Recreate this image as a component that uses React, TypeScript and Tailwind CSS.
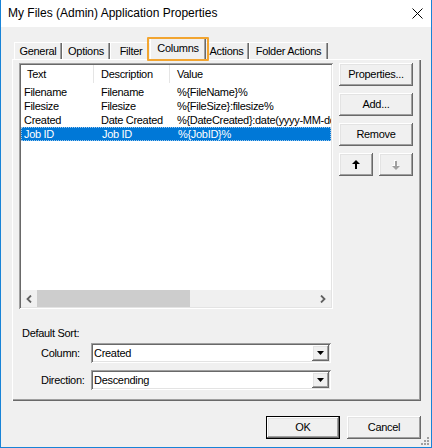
import React from 'react';

const raised =
  'shadow-[inset_-1px_-1px_#696969,inset_1px_1px_#ffffff,inset_-2px_-2px_#a0a0a0,inset_2px_2px_#e3e3e3]';
const sunken =
  'shadow-[inset_1px_1px_#a0a0a0,inset_-1px_-1px_#ffffff,inset_2px_2px_#696969,inset_-2px_-2px_#e3e3e3]';

const tabs = [
  { label: 'General', w: 'w-[48px]' },
  { label: 'Options', w: 'w-[48px]' },
  { label: 'Filter', w: 'w-[42px]' },
  { label: 'Columns', w: 'w-[56px]', active: true },
  { label: 'Actions', w: 'w-[45px]' },
  { label: 'Folder Actions', w: 'w-[79px]' },
];

const rows = [
  { text: 'Filename', desc: 'Filename', value: '%{FileName}%' },
  { text: 'Filesize', desc: 'Filesize', value: '%{FileSize}:filesize%' },
  { text: 'Created', desc: 'Date Created', value: '%{DateCreated}:date(yyyy-MM-dd)%' },
  { text: 'Job ID', desc: 'Job ID', value: '%{JobID}%', selected: true },
];

const Arrow = ({ down = false, disabled = false }: { down?: boolean; disabled?: boolean }) => (
  <svg width="8" height="10" viewBox="0 0 8 10" className={down ? 'rotate-180' : ''}>
    {disabled && <path d="M4.5 1 L8.5 5 L6 5 L6 10 L4 10 L4 5 L1.5 5 Z" fill="#ffffff" />}
    <path d="M4 0 L8 4 L5 4 L5 9 L3 9 L3 4 L0 4 Z" fill={disabled ? '#a0a0a0' : '#000000'} />
  </svg>
);

const Combo = ({ value }: { value: string }) => (
  <div className={`w-[240px] h-[20px] bg-white ${sunken} flex items-center p-[2px]`}>
    <span className="flex-1 pl-[1px]">{value}</span>
    <div className={`w-[17px] h-full bg-[#f0f0f0] ${raised} flex items-center justify-center`}>
      <svg width="7" height="4" viewBox="0 0 7 4">
        <path d="M0 0 L7 0 L3.5 4 Z" fill="#000" />
      </svg>
    </div>
  </div>
);

export default function App() {
  return (
    <div
      className="w-[432px] h-[448px] flex flex-col border-x border-b border-[#1883d7] bg-[#f0f0f0] text-black text-[11px] tracking-[-0.3px] leading-[13px] relative overflow-hidden"
      style={{ fontFamily: '"Liberation Sans", Arial, sans-serif' }}
    >
      {/* Title bar */}
      <div className="h-[27px] bg-white flex items-center pl-[7px] pr-[7px] tracking-normal">
        <span className="text-[12px] flex-1">My Files (Admin) Application Properties</span>
        <svg width="11" height="11" viewBox="0 0 11 11" className="mr-[1px]">
          <path d="M0.5 0.5 L10.5 10.5 M10.5 0.5 L0.5 10.5" stroke="#000" strokeWidth="1" />
        </svg>
      </div>

      <div className="flex-1 flex flex-col pt-[11px]">
        {/* Tabs */}
        <div className="flex items-end h-[21px] pl-[13px]">
          {tabs.map((t) =>
            t.active ? (
              <div
                key={t.label}
                className={`${t.w} h-[22px] -mx-[2px] -mb-px relative z-10 bg-[#f0f0f0] shadow-[inset_1px_1px_#ffffff,inset_-1px_0_#696969,inset_-2px_0_#a0a0a0] flex justify-center pt-[4px]`}
              >
                Columns
                <div className="absolute -left-[3px] -right-[3px] -top-[1px] -bottom-[1px] border-2 border-[#f2a531] rounded-[1px]" />
              </div>
            ) : (
              <div
                key={t.label}
                className={`${t.w} h-[17px] shadow-[inset_1px_1px_#ffffff,inset_-1px_0_#696969,inset_-2px_0_#a0a0a0] flex justify-center pt-[3px]`}
              >
                {t.label}
              </div>
            ),
          )}
        </div>

        {/* Panel */}
        <div className="ml-[11px] w-[409px] h-[342px] shadow-[inset_1px_1px_#ffffff,inset_-1px_-1px_#696969,inset_-2px_-2px_#a0a0a0] pt-[4px] pl-[7px] flex flex-col">
          <div className="flex gap-[6px]">
            {/* List view */}
            <div className={`w-[314px] h-[246px] bg-white ${sunken} p-[2px] flex flex-col`}>
              <div className="h-[18px] flex items-center shrink-0">
                <div className="w-[73px] h-full border-r border-[#e5e5e5] pl-[6px] flex items-center">Text</div>
                <div className="w-[76px] h-full border-r border-[#e5e5e5] pl-[7px] flex items-center">Description</div>
                <div className="flex-1 pl-[7px]">Value</div>
              </div>
              <div className="mt-[2px] flex flex-col">
                {rows.map((r) => (
                  <div
                    key={r.text}
                    className={`h-[14px] flex items-center whitespace-nowrap overflow-hidden ${
                      r.selected ? 'bg-[#0078d7] text-white border border-dotted border-[#9cc8ee]' : ''
                    }`}
                  >
                    <div className={`w-[73px] ${r.selected ? 'pl-[2px]' : 'pl-[3px]'}`}>{r.text}</div>
                    <div className="w-[76px] pl-[7px]">{r.desc}</div>
                    <div className="flex-1 pl-[7px] overflow-hidden">{r.value}</div>
                  </div>
                ))}
              </div>
              {/* Horizontal scrollbar */}
              <div className="mt-auto h-[17px] bg-[#f0f0f0] flex items-center">
                <div className="w-[16px] h-full flex items-center justify-center">
                  <svg width="6" height="8" viewBox="0 0 6 8">
                    <path d="M5 0.5 L1.5 4 L5 7.5" stroke="#606060" strokeWidth="1.8" fill="none" />
                  </svg>
                </div>
                <div className="w-[153px] h-full bg-[#cdcdcd]" />
                <div className="flex-1" />
                <div className="w-[17px] h-full flex items-center justify-center">
                  <svg width="6" height="8" viewBox="0 0 6 8">
                    <path d="M1 0.5 L4.5 4 L1 7.5" stroke="#606060" strokeWidth="1.8" fill="none" />
                  </svg>
                </div>
              </div>
            </div>

            {/* Side buttons */}
            <div className="w-[74px] flex flex-col gap-[7px]">
              <button className={`h-[23px] ${raised} bg-[#f0f0f0]`}>Properties...</button>
              <button className={`h-[23px] ${raised} bg-[#f0f0f0]`}>Add...</button>
              <button className={`h-[23px] ${raised} bg-[#f0f0f0]`}>Remove</button>
              <div className="flex justify-between">
                <button className={`w-[34px] h-[23px] ${raised} bg-[#f0f0f0] flex items-center justify-center`}>
                  <Arrow />
                </button>
                <button className={`w-[34px] h-[23px] ${raised} bg-[#f0f0f0] flex items-center justify-center`}>
                  <Arrow down disabled />
                </button>
              </div>
            </div>
          </div>

          {/* Default sort */}
          <div className="ml-[3px] mt-[18px]">Default Sort:</div>
          <div className="flex items-center mt-[3px]">
            <span className="w-[72px] pl-[22px]">Column:</span>
            <Combo value="Created" />
          </div>
          <div className="flex items-center mt-[7px]">
            <span className="w-[72px] pl-[22px]">Direction:</span>
            <Combo value="Descending" />
          </div>
        </div>

        {/* Footer */}
        <div className="flex justify-end gap-[7px] pr-[10px] mt-[15px]">
          <button className={`w-[74px] h-[23px] border border-black bg-[#f0f0f0] ${raised}`}>OK</button>
          <button className={`w-[74px] h-[23px] bg-[#f0f0f0] ${raised}`}>Cancel</button>
        </div>
      </div>

      {/* Size grip */}
      <svg width="10" height="10" viewBox="0 0 10 10" className="absolute right-[1px] bottom-[1px]">
        <rect x="7" y="1" width="2" height="2" fill="#a0a0a0" />
        <rect x="4" y="4" width="2" height="2" fill="#a0a0a0" />
        <rect x="7" y="4" width="2" height="2" fill="#a0a0a0" />
        <rect x="1" y="7" width="2" height="2" fill="#a0a0a0" />
        <rect x="4" y="7" width="2" height="2" fill="#a0a0a0" />
        <rect x="7" y="7" width="2" height="2" fill="#a0a0a0" />
      </svg>
    </div>
  );
}
